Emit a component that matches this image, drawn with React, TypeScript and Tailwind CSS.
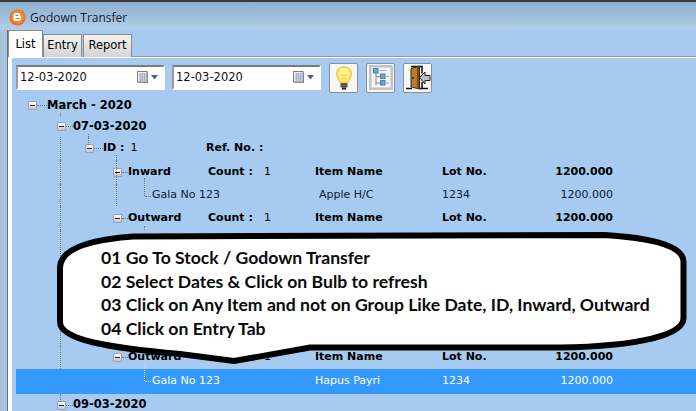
import type { ReactNode } from "react";

function BloggerLogo() {
  return (
    <svg width="17" height="17" viewBox="0 0 17 17">
      <circle cx="8.5" cy="8.5" r="8" fill="#e8701a" />
      <circle cx="8.5" cy="8" r="6.4" fill="#f08a32" />
      <path
        d="M6.4 4h3c1.2 0 2 .8 2 2v.6c0 .6.7.4.7 1.2v1.7c0 1.4-.9 2.5-2.4 2.5H6.4C5.3 12 4.500 11.200 4.500 10V6C4.500 4.800 5.300 4 6.400 4Z"
        fill="#fff"
      />
      <rect x="6.500" y="5.800" width="3" height="1.200" rx=".6" fill="#e8701a" />
      <rect x="6.500" y="8.900" width="4" height="1.200" rx=".6" fill="#e8701a" />
    </svg>
  );
}

function CalendarButton() {
  return (
    <div className="flex items-center gap-[2px]">
      <svg width="12" height="13" viewBox="0 0 12 13">
        <rect x="1.500" y="1.500" width="9.500" height="10.500" fill="#8d97a5" />
        <rect x="0.500" y="0.500" width="9.500" height="10.500" fill="#e9edf2" stroke="#77808c" />
        <path d="M2 3h7M2 5h7M2 7h7M2 9h7M3.500 2v8M5.500 2v8M7.500 2v8" stroke="#a9b3c0" strokeWidth="1" />
      </svg>
      <svg width="8" height="5" viewBox="0 0 8 5">
        <path d="M0 0h7L3.500 4.500Z" fill="#4c6287" />
      </svg>
    </div>
  );
}

function DateField() {
  return (
    <div className="flex h-[25px] w-[149px] items-center justify-between border-2 border-b-white border-l-[#9a9a9a] border-r-white border-t-[#7b7b7b] bg-white pl-[2px] pr-[4px]">
      <span className="text-[11.500px] text-[#111]">12-03-2020</span>
      <CalendarButton />
    </div>
  );
}

function BulbIcon() {
  return (
    <svg width="18" height="24" viewBox="0 0 18 24">
      <path
        d="M9 .8C4.500.8 1.500 4 1.500 7.800c0 3.700 3 5.600 3.800 9.200h7.400c.8-3.600 3.800-5.500 3.800-9.200C16.500 4 13.500.8 9 .8Z"
        fill="#fde95e"
        stroke="#f2b92b"
      />
      <path d="M9 2.500c-3 0-5 2-5 5 0 1.500.8 3 1.800 4.500h6.400c1-1.500 1.800-3 1.800-4.500 0-3-2-5-5-5Z" fill="#fff39a" />
      <path d="M6.500 9.500h5M7 12h4" stroke="#e9c447" />
      <rect x="5.500" y="17" width="7" height="4.500" fill="#5a5a50" />
      <rect x="7" y="21.500" width="4" height="2" fill="#22221e" />
    </svg>
  );
}

function TreeListIcon() {
  return (
    <svg width="24" height="25" viewBox="0 0 24 25">
      <rect x="1" y="1" width="22" height="23" fill="#d9d9d9" stroke="#c4c4c4" strokeWidth="2" />
      <rect x="3" y="3" width="18" height="19" fill="#f4f4f4" />
      <path d="M7 8v12M7 11.500h5M7 18h5" stroke="#7b8794" fill="none" />
      <rect x="4.500" y="3.500" width="4.500" height="4.500" fill="#6aa5d8" stroke="#4f7fae" />
      <rect x="11.500" y="9" width="4.500" height="4.500" fill="#6aa5d8" stroke="#4f7fae" />
      <rect x="11.500" y="15.500" width="4.500" height="4.500" fill="#6aa5d8" stroke="#4f7fae" />
      <path d="M10.500 5.500h7M17 11.500h3M17 18h3" stroke="#a3a7ac" />
    </svg>
  );
}

function ExitIcon() {
  return (
    <svg width="27" height="26" viewBox="0 0 27 26">
      <path d="M2 23.500h6M15 23.500h9M7 1.500h11v7M18 17v6" stroke="#111" strokeWidth="1.500" fill="none" />
      <path d="M7 3.500 15.500 1v23l-8.500-2Z" fill="#b67b2c" stroke="#3b2a10" />
      <path d="M14 2v21" stroke="#7a4e14" strokeWidth="2" />
      <circle cx="9" cy="13" r=".9" fill="#222" />
      <path d="M15.500 12.500 21 7v3.500h5v5h-5V19Z" fill="#bdbdbd" stroke="#222" />
    </svg>
  );
}

function ToolButton({ children }: { children: ReactNode }) {
  return (
    <button className="flex h-[30px] w-[29px] items-center justify-center rounded-[2px] border border-[#8e8e8e] bg-[#f7f7f7]">
      {children}
    </button>
  );
}

// expand box + dotted stub in front of a group label
function Node({ stub }: { stub: string }) {
  return (
    <div className="flex items-center">
      <div className="flex h-[9px] w-[9px] items-center justify-center rounded-[1px] border border-[#9aa3ad] bg-gradient-to-b from-white to-[#c4c8cc]">
        <div className="h-px w-[5px] bg-[#222]" />
      </div>
      <div className={`border-t border-dotted border-[#777] ${stub}`} />
    </div>
  );
}

function Guide({ className }: { className: string }) {
  return <div className={`absolute w-0 border-l border-dotted border-[#777] ${className}`} />;
}

function Leaf({ name, item, row, selected }: { name: string; item: ReactNode; row: string; selected?: boolean }) {
  return (
    <div className={`relative flex items-center ${row} ${selected ? "bg-[#3399ff] text-white" : "text-[#10203a]"}`}>
      {!selected && <Guide className="left-[44px] inset-y-0" />}
      {!selected && <Guide className="left-[100px] inset-y-0" />}
      <Guide className={`left-[128px] top-[-3px] h-[15px] ${selected ? "border-[#f0d8b0]" : ""}`} />
      <div className={`absolute left-[129px] top-[12px] w-[6px] border-t border-dotted ${selected ? "border-[#f0d8b0]" : "border-[#777]"}`} />
      <div className="w-[299px] pl-[136px]">{name}</div>
      <div className="w-[127px]">{item}</div>
      <div className="w-[57px]">1234</div>
      <div className="w-[114px] text-right">1200.000</div>
    </div>
  );
}

function GroupRow({ label, row, guides }: { label: string; row: string; guides?: ReactNode }) {
  return (
    <div className={`relative flex items-center font-bold ${row}`}>
      {guides}
      <div className="flex w-[192px] items-center pl-[97px]">
        <Node stub="w-[6px]" />
        <span>{label}</span>
      </div>
      <div className="w-[56px]">Count :</div>
      <div className="w-[51px] font-normal">1</div>
      <div className="w-[127px]">Item Name</div>
      <div className="w-[57px]">Lot No.</div>
      <div className="w-[114px] text-right">1200.000</div>
    </div>
  );
}

export default function App() {
  return (
    <div className="relative h-[411px] w-[696px] overflow-hidden bg-[#a6caf0] font-['DejaVu_Sans',sans-serif] text-[11px] text-black">
      {/* Title bar */}
      <div className="flex h-[30px] items-center gap-[4px] border-t-2 border-t-[#3a3a3a] bg-gradient-to-b from-[#8fb0cf] to-[#b3cee8] pl-[9px] pt-[3px]">
        <BloggerLogo />
        <span className="font-['Open_Sans',sans-serif] text-[12px] text-[#15202e]">Godown Transfer</span>
      </div>

      <div className="flex">
        {/* Glass window edge */}
        <div className="h-[381px] w-[8px] border-r border-[#5f6f80] bg-[#a9c3dc]" />

        <div className="min-w-0 flex-1">
          {/* Tabs */}
          <div className="flex h-[27px] items-end">
            <div className="z-10 flex h-[27px] w-[35px] justify-center border border-b-0 border-[#8b8b8b] bg-white pt-[5px] text-[11.500px]">List</div>
            <div className="flex h-[23px] w-[39px] items-center justify-center border border-b-0 border-[#8b8b8b] bg-gradient-to-b from-[#f4f4f4] to-[#d4d4d4] text-[11.500px]">Entry</div>
            <div className="ml-px flex h-[23px] w-[49px] items-center justify-center border border-b-0 border-[#8b8b8b] bg-gradient-to-b from-[#f4f4f4] to-[#d4d4d4] text-[11.500px]">Report</div>
            <div className="h-[1px] flex-1 self-end bg-[#999]" />
          </div>

          {/* Tab page */}
          <div className="h-[354px] border-t border-t-white border-l-4 border-l-white bg-[#a6caf0] pl-[4px]">
            <div className="flex h-[37px] items-center gap-[7px] pt-[2px]">
              <DateField />
              <DateField />
              <div className="ml-[1px] flex gap-[8px]">
                <ToolButton><BulbIcon /></ToolButton>
                <ToolButton><TreeListIcon /></ToolButton>
                <ToolButton><ExitIcon /></ToolButton>
              </div>
            </div>

            {/* Transfer tree */}
            <div>
              <div className="relative flex h-[21px] items-center pl-[12px] font-bold">
                <Node stub="w-[10px]" />
                <span className="text-[11.500px]">March - 2020</span>
                <Guide className="left-[44px] top-[18px] h-[3px]" />
              </div>
              <div className="relative flex h-[21px] items-center pl-[41px] font-bold">
                <Node stub="w-[7px]" />
                <span className="text-[11.500px]">07-03-2020</span>
                <Guide className="left-[72px] top-[18px] h-[3px]" />
              </div>
              <div className="relative flex h-[23px] items-center font-bold">
                <Guide className="left-[44px] inset-y-0" />
                <Guide className="left-[72px] top-0 h-[8px]" />
                <Guide className="left-[100px] top-[18px] bottom-0" />
                <div className="flex w-[190px] items-center pl-[69px]">
                  <Node stub="w-[9px]" />
                  <span>ID :</span>
                  <span className="ml-[6px] font-normal">1</span>
                </div>
                <span>Ref. No. :</span>
              </div>
              <GroupRow
                label="Inward"
                row="h-[24px]"
                guides={
                  <>
                    <Guide className="left-[44px] inset-y-0" />
                    <Guide className="left-[100px] inset-y-0" />
                    <Guide className="left-[128px] top-[18px] bottom-0" />
                  </>
                }
              />
              <Leaf name="Gala No 123" item={<span className="pl-[4px]">Apple H/C</span>} row="h-[22px]" />
              <GroupRow
                label="Outward"
                row="h-[24px]"
                guides={
                  <>
                    <Guide className="left-[44px] inset-y-0" />
                    <Guide className="left-[128px] top-[20px] bottom-0" />
                  </>
                }
              />
              {/* rows under the callout */}
              <div className="relative h-[116px]">
                <Guide className="left-[44px] inset-y-0" />
              </div>
              <GroupRow
                label="Outward"
                row="h-[23px]"
                guides={
                  <>
                    <Guide className="left-[44px] inset-y-0" />
                    <Guide className="left-[128px] top-[20px] bottom-0" />
                  </>
                }
              />
              <Leaf name="Gala No 123" item="Hapus Payri" row="h-[25px]" selected />
              <div className="relative flex h-[22px] items-center pl-[41px] font-bold">
                <Guide className="left-[44px] top-0 h-[8px]" />
                <Node stub="w-[7px]" />
                <span className="text-[11.500px]">09-03-2020</span>
              </div>
            </div>
          </div>
        </div>
      </div>

      {/* Instruction callout drawn over the tree */}
      <div className="absolute left-[56px] top-[232px] h-[132px] w-[632px]">
        <svg className="absolute inset-0" width="632" height="132" viewBox="56 232 632 132">
          <path
            d="M60 268C60 250 85 240 133 236.500L605 235C650 238 683.500 245 683.500 262L683.500 318C683.500 335 640 346 560 347.500L310 347.500L234 361L180 354C110 348 60 340 60 322Z"
            fill="#fff"
            stroke="#000"
            strokeWidth="6"
          />
        </svg>
        <div className="absolute left-[45px] top-[14px] flex flex-col font-['Lato',sans-serif] text-[17.600px] font-bold leading-[23.700px] text-[#0a0a0a]">
          <span>01 Go To Stock / Godown Transfer</span>
          <span>02 Select Dates &amp; Click on Bulb to refresh</span>
          <span>03 Click on Any Item and not on Group Like Date, ID, Inward, Outward</span>
          <span>04 Click on Entry Tab</span>
        </div>
      </div>
    </div>
  );
}
